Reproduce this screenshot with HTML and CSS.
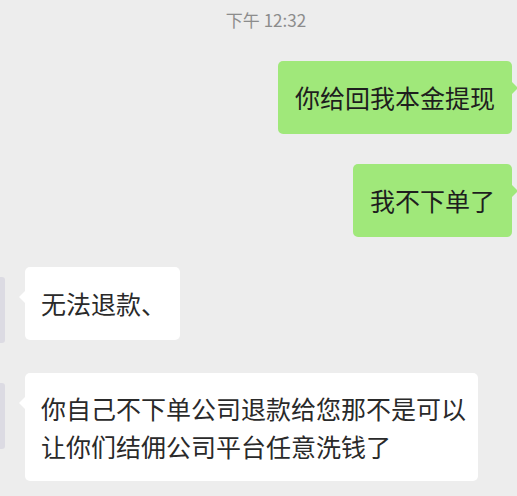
FILE: index.html
```html
<!DOCTYPE html>
<html lang="zh">
<head>
<meta charset="utf-8">
<title>Chat</title>
<link rel="stylesheet" href="styles.css">
</head>
<body>
<div class="chat">
  <div class="time">下午 12:32</div>
  <div class="msg msg-out"><div class="bubble bubble-out">你给回我本金提现</div></div>
  <div class="msg msg-out"><div class="bubble bubble-out">我不下单了</div></div>
  <div class="msg msg-in"><div class="avatar"></div><div class="bubble bubble-in">无法退款、</div></div>
  <div class="msg msg-in"><div class="avatar"></div><div class="bubble bubble-in bubble-long">你自己不下单公司退款给您那不是可以让你们结佣公司平台任意洗钱了</div></div>
</div>
</body>
</html>
```
FILE: styles.css
```css
html, body {
  margin: 0;
  padding: 0;
  background: #ededed;
}
body {
  font-family: "Noto Sans CJK SC", "Noto Sans", sans-serif;
  width: 517px;
  height: 496px;
  overflow: hidden;
}
.chat {
  display: flex;
  flex-direction: column;
  gap: 30px;
  padding: 10px 5px 0 0;
}
.time {
  text-align: center;
  font-size: 17px;
  line-height: 20px;
  color: #8c8c8c;
  padding-left: 20px;
  margin-bottom: 1px;
}
.msg {
  display: flex;
  align-items: flex-start;
}
.msg-out {
  justify-content: flex-end;
}
.avatar {
  width: 5px;
  height: 66px;
  margin-top: 10px;
  margin-right: 20px;
  background: #dcdbe3;
  border-radius: 0 3px 3px 0;
  flex: none;
}
.bubble {
  position: relative;
  font-size: 25px;
  line-height: 35px;
  color: #1e1e1e;
  border-radius: 5px;
  box-sizing: border-box;
}
.bubble-out {
  background: #a0e87a;
  padding: 19px 17px;
}
.bubble-in {
  background: #ffffff;
  padding: 19px 14px 19px 16px;
  color: #2a2a2a;
}
.bubble-long {
  max-width: 453px;
  padding: 16px 12px 16px 16px;
  line-height: 38px;
}
.bubble-out::after {
  content: "";
  position: absolute;
  right: -6px;
  top: 21px;
  border-left: 6px solid #a0e87a;
  border-top: 6px solid transparent;
  border-bottom: 6px solid transparent;
}
.bubble-in::before {
  content: "";
  position: absolute;
  left: -6px;
  top: 24px;
  border-right: 6px solid #ffffff;
  border-top: 6px solid transparent;
  border-bottom: 6px solid transparent;
}
```
